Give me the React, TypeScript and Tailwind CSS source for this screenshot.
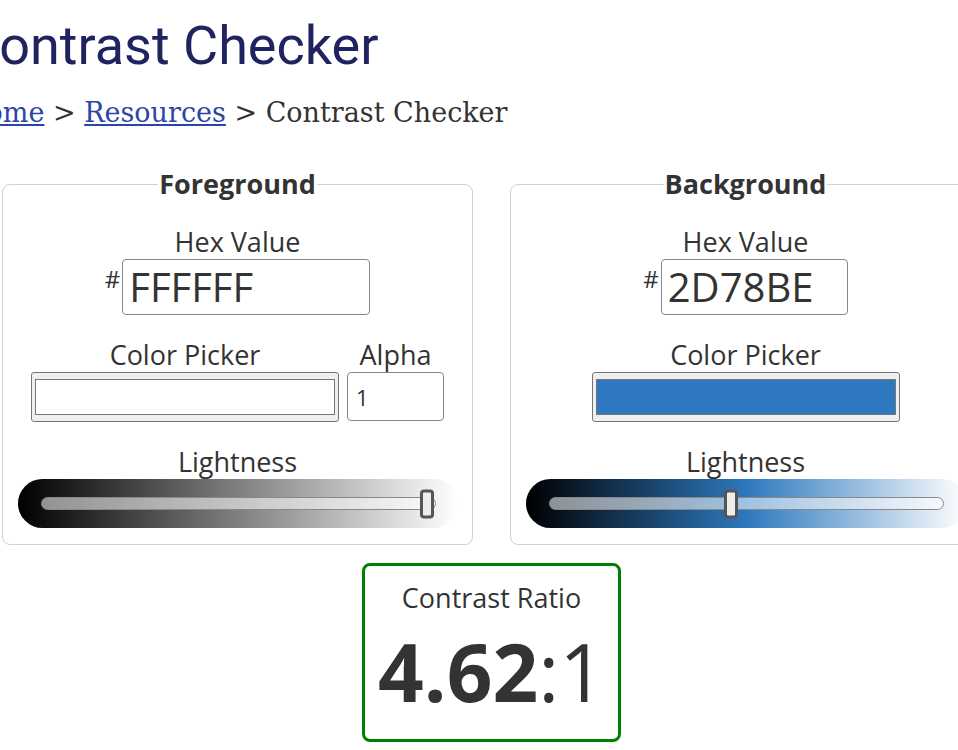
const sans = "font-['Open_Sans',sans-serif]";

function Slider({ gradient, thumbLeft }: { gradient: string; thumbLeft: number }) {
  return (
    <div className={`mx-auto flex h-[49px] w-[440px] items-center rounded-full pl-[23px] pr-[22px] ${gradient}`}>
      <div className="relative h-[13px] flex-1 rounded-full border border-[#888] bg-white/55">
        <div
          className="absolute top-1/2 h-[29px] w-[14px] -translate-y-1/2 rounded-[4px] border-[3px] border-[#555] bg-[#eee]"
          style={{ left: thumbLeft }}
        />
      </div>
    </div>
  );
}

function Label({ children }: { children: React.ReactNode }) {
  return <div className="text-[27px] leading-[34px] text-[#333]">{children}</div>;
}

function Panel({
  title,
  hex,
  hexWidth,
  swatch,
  alpha,
  gradient,
  thumbLeft,
}: {
  title: string;
  hex: string;
  hexWidth: string;
  swatch: string;
  alpha?: string;
  gradient: string;
  thumbLeft: number;
}) {
  return (
    <fieldset className="w-[471px] rounded-[8px] border border-[#d0d0d0] pb-[16px]">
      <legend className="mx-auto px-[1px] text-[27px] font-bold leading-[36px] text-[#333]">{title}</legend>

      <div className="mt-[23px] flex flex-col items-center">
        <Label>Hex Value</Label>
        <div className="flex items-start">
          <span className="mr-[2px] mt-[4px] text-[24px] leading-[32px] text-[#333]">#</span>
          <input
            readOnly
            value={hex}
            className={`h-[56px] rounded-[4px] border border-[#888] pl-[6px] text-[40px] text-[#333] outline-none ${hexWidth}`}
          />
        </div>
      </div>

      <div className="mt-[23px] flex justify-center gap-[8px]">
        <div className="flex flex-col items-center">
          <Label>Color Picker</Label>
          <div className="h-[50px] w-[308px] rounded-[3px] border border-[#767676] bg-[#efefef] px-[3px] py-[6px]">
            <div className={`h-full w-full border border-[#767676] ${swatch}`} />
          </div>
        </div>
        {alpha && (
          <div className="flex flex-col items-center">
            <Label>Alpha</Label>
            <input
              readOnly
              value={alpha}
              className="h-[49px] w-[97px] rounded-[4px] border border-[#888] pl-[8px] text-[22px] text-[#333] outline-none"
            />
          </div>
        )}
      </div>

      <div className="mt-[23px] flex flex-col items-center">
        <Label>Lightness</Label>
      </div>
      <Slider gradient={gradient} thumbLeft={thumbLeft} />
    </fieldset>
  );
}

export default function App() {
  return (
    <div className={`h-[750px] w-[958px] overflow-hidden bg-white ${sans}`}>
      <h1 className="ml-[-36px] mt-[19px] whitespace-nowrap font-['Roboto',sans-serif] text-[54px] font-normal leading-[54px] text-[#1f2460]">
        Contrast Checker
      </h1>

      <nav className="ml-[-37px] mt-[24px] whitespace-nowrap font-['DejaVu_Serif',serif] text-[27px] leading-[32px] text-[#333]">
        <a href="#" className="text-[#2a46a8] underline">Home</a>
        {' > '}
        <a href="#" className="text-[#2a46a8] underline">Resources</a>
        {' > '}
        Contrast Checker
      </nav>

      <div className="ml-[2px] mt-[37px] w-[979px]">
        <div className="flex gap-[37px]">
          <Panel
            title="Foreground"
            hex="FFFFFF"
            hexWidth="w-[248px]"
            swatch="bg-white"
            alpha="1"
            gradient="bg-[linear-gradient(to_right,#000,#fff)]"
            thumbLeft={378}
          />
          <Panel
            title="Background"
            hex="2D78BE"
            hexWidth="w-[187px]"
            swatch="bg-[#2d78be]"
            gradient="bg-[linear-gradient(to_right,#000,#2d78be_50%,#fff)]"
            thumbLeft={174}
          />
        </div>

        <div className="mx-auto mt-[18px] h-[179px] w-[259px] rounded-[8px] border-[3px] border-[#008000] pt-[15px] text-center text-[#333]">
          <div className="text-[27px] leading-[34px]">Contrast Ratio</div>
          <div className="mt-[8px] text-[80px] leading-[96px]">
            <span className="font-bold">4.62</span>:1
          </div>
        </div>
      </div>
    </div>
  );
}
